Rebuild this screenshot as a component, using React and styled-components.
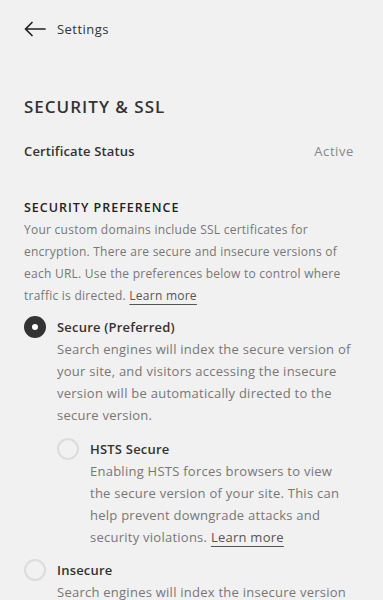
import React from 'react'
import styled, { createGlobalStyle } from 'styled-components'

const GlobalStyle = createGlobalStyle`
  html, body {
    margin: 0;
    padding: 0;
    background: #f1f1f1;
  }
  body {
    font-family: 'Open Sans', 'Liberation Sans', sans-serif;
    -webkit-font-smoothing: antialiased;
  }
`

const COLOR = {
  TEXT: '#333',
  SUB_TEXT: '#777',
  MUTED: '#888',
  RADIO_BORDER: '#dcdcdc',
}

function BackArrow() {
  return (
    <svg width="22" height="16" viewBox="0 0 22 16" fill="none">
      <path
        d="M21 8H1.5M8 1.5L1.5 8l6.5 6.5"
        stroke="#222"
        strokeWidth="1.7"
        strokeLinecap="round"
        strokeLinejoin="round"
      />
    </svg>
  )
}

function RadioOption({ checked, title, children, nested }) {
  return (
    <OptionRow nested={nested}>
      <Radio checked={checked} />
      <OptionBody>
        <OptionTitle>{title}</OptionTitle>
        <OptionText>{children}</OptionText>
      </OptionBody>
    </OptionRow>
  )
}

function App() {
  return (
    <>
      <GlobalStyle />
      <Page>
        <BackBar>
          <BackArrow />
          <BackLabel>Settings</BackLabel>
        </BackBar>

        <Title>SECURITY &amp; SSL</Title>

        <StatusRow>
          <StatusLabel>Certificate Status</StatusLabel>
          <StatusValue>Active</StatusValue>
        </StatusRow>

        <SectionHeading>SECURITY PREFERENCE</SectionHeading>
        <SectionText>
          Your custom domains include SSL certificates for encryption. There are
          secure and insecure versions of each URL. Use the preferences below to
          control where traffic is directed. <Link>Learn more</Link>
        </SectionText>

        <Options>
          <RadioOption checked title="Secure (Preferred)">
            Search engines will index the secure version of your site, and
            visitors accessing the insecure version will be automatically
            directed to the secure version.
          </RadioOption>
          <RadioOption nested title="HSTS Secure">
            Enabling HSTS forces browsers to view the secure version of your
            site. This can help prevent downgrade attacks and security
            violations. <Link>Learn more</Link>
          </RadioOption>
          <RadioOption title="Insecure">
            Search engines will index the insecure version of your site, and
            visitors will not be redirected.
          </RadioOption>
        </Options>
      </Page>
    </>
  )
}

const Page = styled.div`
  width: 383px;
  height: 600px;
  box-sizing: border-box;
  padding: 0 29px 0 24px;
  overflow: hidden;
  background: #f1f1f1;
`

const BackBar = styled.div`
  height: 58px;
  display: flex;
  align-items: center;
  gap: 11px;
  cursor: pointer;
`

const BackLabel = styled.span`
  font-size: 13px;
  color: ${COLOR.TEXT};
  letter-spacing: 0.45px;
`

const Title = styled.h1`
  margin: 37px 0 0;
  font-size: 17px;
  font-weight: 600;
  line-height: 24px;
  color: ${COLOR.TEXT};
  letter-spacing: 1px;
`

const StatusRow = styled.div`
  margin-top: 22px;
  display: flex;
  justify-content: space-between;
  align-items: center;
  font-size: 13px;
  line-height: 20px;
`

const StatusLabel = styled.span`
  font-weight: 600;
  color: ${COLOR.TEXT};
  letter-spacing: 0.15px;
`

const StatusValue = styled.span`
  color: ${COLOR.MUTED};
  letter-spacing: 0.6px;
`

const SectionHeading = styled.h2`
  margin: 37px 0 0;
  font-size: 12.5px;
  font-weight: 600;
  line-height: 20px;
  color: #222;
  letter-spacing: 1px;
`

const SectionText = styled.p`
  margin: 1px 0 0;
  font-size: 12px;
  line-height: 22px;
  color: ${COLOR.SUB_TEXT};
  letter-spacing: 0.25px;
`

const Link = styled.a`
  color: #555;
  text-decoration: underline;
  text-decoration-color: #555;
  text-decoration-thickness: 1px;
  text-underline-offset: 4px;
  cursor: pointer;
`

const Options = styled.div`
  margin-top: 9px;
  display: flex;
  flex-direction: column;
  gap: 11.5px;
`

const OptionRow = styled.div`
  display: flex;
  gap: 11px;
  padding-left: ${({ nested }) => (nested ? '33px' : '0')};
`

const Radio = styled.span`
  flex: none;
  width: 22px;
  height: 22px;
  box-sizing: border-box;
  border-radius: 50%;
  border: ${({ checked }) =>
    checked ? `8px solid #333` : `2px solid ${COLOR.RADIO_BORDER}`};
  background: ${({ checked }) => (checked ? '#fff' : 'transparent')};
`

const OptionBody = styled.div`
  display: flex;
  flex-direction: column;
`

const OptionTitle = styled.div`
  font-size: 13px;
  font-weight: 600;
  line-height: 22px;
  color: ${COLOR.TEXT};
  letter-spacing: 0.2px;
`

const OptionText = styled.div`
  font-size: 13px;
  line-height: 22px;
  color: ${COLOR.SUB_TEXT};
  letter-spacing: 0.25px;
`

export default App
